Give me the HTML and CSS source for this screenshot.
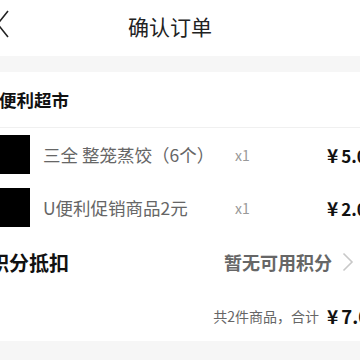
FILE: index.html
```html
<!DOCTYPE html>
<html lang="zh-CN">
<head>
<meta charset="utf-8">
<link rel="stylesheet" href="styles.css">
</head>
<body>
<div class="page">
  <header class="nav">
    <svg class="back" width="14" height="28" viewBox="0 0 14 28"><path d="M12 1 L1.5 14 L12 27" fill="none" stroke="#222" stroke-width="1.6"/></svg>
    <h1 class="title">确认订单</h1>
  </header>
  <div class="band"></div>
  <section class="order">
    <div class="store">U便利超市</div>
    <div class="item">
      <div class="thumb"></div>
      <div class="name">三全 整笼蒸饺（6个）</div>
      <div class="qty">x1</div>
      <div class="price"><span class="cur">¥</span>5.00</div>
    </div>
    <div class="item">
      <div class="thumb"></div>
      <div class="name">U便利促销商品2元</div>
      <div class="qty">x1</div>
      <div class="price"><span class="cur">¥</span>2.00</div>
    </div>
    <div class="points">
      <div class="points-label">积分抵扣</div>
      <div class="points-value">暂无可用积分
        <svg class="arrow" width="12" height="20" viewBox="0 0 12 20"><path d="M1.5 1.5 L10 10 L1.5 18.5" fill="none" stroke="#c8c8c8" stroke-width="1.6"/></svg>
      </div>
    </div>
    <div class="total">
      <div class="total-label">共2件商品，合计</div>
      <div class="price total-price"><span class="cur">¥</span>7.00</div>
    </div>
  </section>
  <div class="band band-bottom"></div>
</div>
</body>
</html>
```
FILE: styles.css
```css
html, body {
  margin: 0;
  padding: 0;
  background: #fff;
  overflow: hidden;
}
body {
  width: 360px;
  height: 360px;
  font-family: "Noto Sans CJK SC", "Noto Sans", sans-serif;
  color: #111;
}
.page {
  width: 375px;
  margin-left: -10px;
  box-sizing: border-box;
}
.nav {
  height: 56px;
  display: flex;
  align-items: center;
  justify-content: center;
  position: relative;
}
.back {
  position: absolute;
  left: 6px;
  top: 10px;
}
.title {
  margin: 0 15px 4px 0;
  font-size: 21px;
  font-weight: 400;
  color: #222;
  line-height: 1;
}
.band {
  height: 16px;
  background: #f6f6f6;
}
.band-bottom {
  height: 30px;
}
.order {
  display: flex;
  flex-direction: column;
}
.store {
  height: 55px;
  line-height: 55px;
  font-size: 17.5px;
  font-weight: 700;
  color: #111;
  border-bottom: 1px solid #f0f0f0;
  text-indent: -4px;
}
.item {
  display: grid;
  grid-template-columns: 40px 205px 92px 1fr;
  align-items: center;
  height: 53px;
}
.thumb {
  width: 40px;
  height: 39px;
  background: #000;
  margin-top: -1px;
}
.name {
  padding-left: 13px;
  font-size: 17.5px;
  color: #666;
  white-space: nowrap;
}
.qty {
  font-size: 14px;
  color: #999;
}
.price {
  font-size: 17px;
  font-weight: 700;
  color: #111;
  white-space: nowrap;
}
.cur {
  display: inline-block;
  font-size: 19px;
  margin-right: 3px;
}
.points {
  height: 56px;
  display: flex;
  align-items: center;
  justify-content: space-between;
  padding-right: 11px;
}
.points-label {
  font-size: 20px;
  font-weight: 700;
  color: #111;
  margin-left: -1px;
}
.points-value {
  display: flex;
  align-items: center;
  gap: 10px;
  font-size: 18px;
  font-weight: 700;
  color: #666;
}
.total {
  height: 51px;
  display: grid;
  grid-template-columns: 337px 1fr;
  align-items: center;
}
.total-label {
  text-align: right;
  font-size: 14px;
  color: #666;
  padding-right: 8px;
}
.total-price {
  font-size: 18.5px;
}
```
